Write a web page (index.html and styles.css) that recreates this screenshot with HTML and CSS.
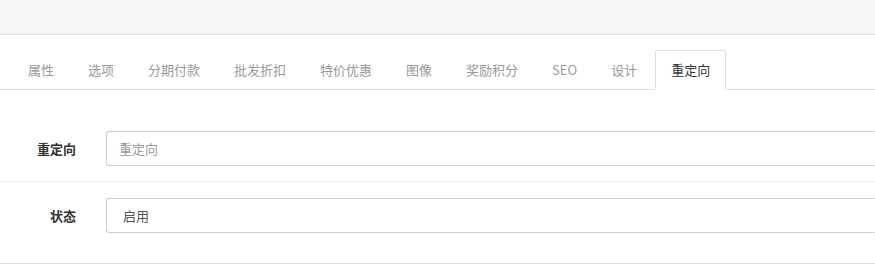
FILE: index.html
```html
<!DOCTYPE html>
<html lang="zh-CN">
<head>
    <meta charset="UTF-8">
    <meta name="viewport" content="width=device-width, initial-scale=1.0">
    <title>重定向</title>
    <link rel="stylesheet" href="styles.css">
</head>
<body>
    <div class="page-header"></div>

    <ul class="nav-tabs">
        <li><a href="#">属性</a></li>
        <li><a href="#">选项</a></li>
        <li><a href="#">分期付款</a></li>
        <li><a href="#">批发折扣</a></li>
        <li><a href="#">特价优惠</a></li>
        <li><a href="#">图像</a></li>
        <li><a href="#">奖励积分</a></li>
        <li><a href="#">SEO</a></li>
        <li><a href="#">设计</a></li>
        <li class="active"><a href="#">重定向</a></li>
    </ul>

    <form class="tab-form">
        <div class="form-group">
            <label for="redirect">重定向</label>
            <input type="text" id="redirect" class="form-control" placeholder="重定向">
        </div>
        <div class="form-group">
            <label for="status">状态</label>
            <select id="status" class="form-control select">
                <option value="1">启用</option>
                <option value="0">停用</option>
            </select>
        </div>
    </form>
</body>
</html>
```

FILE: styles.css
```css
body {
    margin: 0;
    padding: 0;
    font-family: "Noto Sans CJK SC", "Open Sans", sans-serif;
    font-size: 13px;
    color: #555;
    background: #fff;
}

.page-header {
    height: 34px;
    background-color: #f6f6f6;
    border-bottom: 1px solid #ddd;
}

.nav-tabs {
    display: flex;
    list-style: none;
    margin: 15px 0 25px;
    padding: 0 0 0 12px;
    border-bottom: 1px solid #ddd;
}

.nav-tabs li {
    margin-bottom: -1px;
}

.nav-tabs a {
    display: block;
    padding: 10px 15px;
    margin-right: 2px;
    line-height: 18px;
    color: #999;
    text-decoration: none;
    border: 1px solid transparent;
    border-radius: 2px 2px 0 0;
}

.nav-tabs .active a {
    color: #333;
    background: #fff;
    border-color: #ddd #ddd transparent;
}

.tab-form {
    padding-bottom: 15px;
    border-bottom: 1px solid #ddd;
}

.form-group {
    display: grid;
    grid-template-columns: 76px 1fr;
    column-gap: 30px;
    align-items: center;
    padding: 16px 0 15px;
}

.form-group + .form-group {
    border-top: 1px solid #ededed;
}

.form-group label {
    text-align: right;
    font-weight: bold;
    color: #333;
}

/* field continues past the right edge of the window */
.form-control {
    box-sizing: border-box;
    width: 100%;
    height: 35px;
    padding: 6px 12px;
    font-family: inherit;
    font-size: 13px;
    color: #555;
    background: #fff;
    border: 1px solid #ccc;
    border-right-color: transparent;
    border-radius: 3px 0 0 3px;
    outline: none;
}

.form-control::placeholder {
    color: #999;
}

.select {
    appearance: none;
    padding-left: 16px;
}
```
